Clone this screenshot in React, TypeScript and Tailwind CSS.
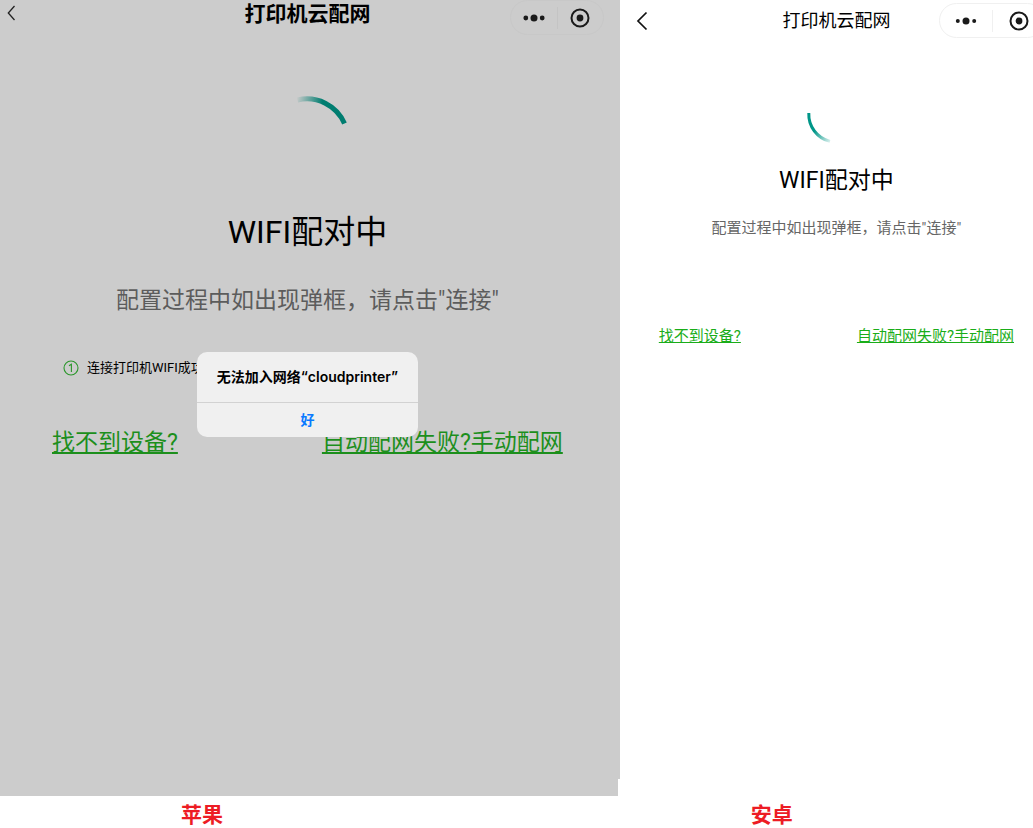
import React from "react";

type CapsuleProps = { className: string; dotsClass: string; targetClass: string; dotRadius: number };

function Capsule({ className, dotsClass, targetClass, dotRadius }: CapsuleProps) {
  return (
    <div className={`flex items-center rounded-full border ${className}`}>
      <button type="button" aria-label="更多" className={`flex items-center justify-center border-r ${dotsClass}`}>
        <svg width="22" height="8" viewBox="0 0 22 8" fill="#1a1a1a">
          <circle cx="2.8" cy="4" r={dotRadius} />
          <circle cx="11" cy="4" r="3.5" />
          <circle cx="19.2" cy="4" r={dotRadius} />
        </svg>
      </button>
      <button type="button" aria-label="关闭" className={`flex items-center justify-center ${targetClass}`}>
        <svg width="20" height="20" viewBox="0 0 20 20">
          <circle cx="10" cy="10" r="8.5" fill="none" stroke="#1a1a1a" strokeWidth="2" />
          <circle cx="10" cy="10" r="3.4" fill="#1a1a1a" />
        </svg>
      </button>
    </div>
  );
}

function IosScreen() {
  return (
    <div className="relative flex flex-1 flex-col">
      <div className="flex-1 bg-[#cccccc] pr-[5px]">
        <header className="grid grid-cols-[1fr_auto_1fr] items-start">
          <button type="button" aria-label="返回" className="flex h-[26px] w-6 items-center pl-[7px]">
            <svg width="9" height="16" viewBox="0 0 9 16" fill="none" stroke="#222" strokeWidth="1.3">
              <path d="M7.5 1 1.3 8l6.2 7" />
            </svg>
          </button>
          <h1 className="text-[21px] leading-7 font-bold text-black">打印机云配网</h1>
          <Capsule
            className="mr-[11px] h-[35px] justify-self-end border-[#c8c8c8]"
            dotsClass="h-[22px] w-[47px] border-[#c4c4c4]"
            targetClass="w-[45px]"
            dotRadius={2.4}
          />
        </header>
        <svg className="mx-auto mt-[59px]" width="90" height="90" viewBox="0 0 90 90" fill="none">
          <defs>
            <linearGradient id="ios-arc" gradientUnits="userSpaceOnUse" x1="34" y1="5" x2="60" y2="10">
              <stop offset="0" stopColor="#007d70" stopOpacity="0" />
              <stop offset="1" stopColor="#007d70" />
            </linearGradient>
          </defs>
          <path d="M35.5 6A41 41 0 0 1 82.5 29.5" stroke="url(#ios-arc)" strokeWidth="5" />
        </svg>
        <h2 className="mt-6 text-center text-[32px] leading-[48px] text-black">WIFI配对中</h2>
        <p className="mt-[29px] text-center text-[23px] leading-8 text-[#5c5c5c]">
          配置过程中如出现弹框，请点击"连接"
        </p>
        <div className="mt-10 flex items-center gap-2 pl-[63px] text-[13px] leading-[22px] text-black">
          <svg width="16" height="16" viewBox="0 0 16 16" fill="none" stroke="#2a962a" strokeWidth="1.1">
            <circle cx="8" cy="8" r="7" />
            <path d="M6 5.7 8.4 4.2V12" />
          </svg>
          <span>连接打印机WIFI成功</span>
        </div>
        <nav className="mt-12 flex justify-between px-[52px] text-[23px] leading-8 text-[#1c8f1c]">
          <a href="#device" className="underline">找不到设备?</a>
          <a href="#manual" className="underline">自动配网失败?手动配网</a>
        </nav>
      </div>
      <div className="mr-0.5 h-[17px] bg-[#cccccc]" />
      <div className="absolute inset-0 flex items-center justify-center pr-[5px] pb-[7px]">
        <div role="alertdialog" aria-labelledby="alert-title" className="w-[221px] overflow-hidden rounded-[10px] bg-[#f0f0f0]">
          <p id="alert-title" className="border-b border-[#d2d2d2] text-center text-[14px] leading-[50px] font-semibold text-black">
            无法加入网络<span className="font-[Inter]">“cloudprinter”</span>
          </p>
          <button type="button" className="block w-full text-[14px] leading-[34px] font-semibold text-[#0a7aff]">好</button>
        </div>
      </div>
    </div>
  );
}

function AndroidScreen() {
  return (
    <div className="-mr-5 flex-1">
      <header className="grid h-[41px] grid-cols-[1fr_auto_1fr] items-center">
        <button type="button" aria-label="返回" className="flex w-8 items-center pl-4">
          <svg width="12" height="20" viewBox="0 0 12 20" fill="none" stroke="#111" strokeWidth="1.7">
            <path d="M10.5 1.5 2 10l8.5 8.5" />
          </svg>
        </button>
        <h1 className="text-[18px] leading-[25px] text-black">打印机云配网</h1>
        <Capsule
          className="mr-2 h-[35px] justify-self-end border-[#f0f0f0]"
          dotsClass="h-[22px] w-[53px] border-[#f0f0f0]"
          targetClass="w-[51px]"
          dotRadius={2}
        />
      </header>
      <svg className="mx-auto mt-[43px]" width="60" height="60" viewBox="0 0 60 60" fill="none">
        <defs>
          <linearGradient id="android-arc" gradientUnits="userSpaceOnUse" x1="25" y1="58" x2="9" y2="46">
            <stop offset="0" stopColor="#009688" stopOpacity="0.1" />
            <stop offset="1" stopColor="#009688" />
          </linearGradient>
        </defs>
        <path d="M2.8 29A28 28 0 0 0 24 57.4" stroke="url(#android-arc)" strokeWidth="3" />
      </svg>
      <h2 className="mt-[21px] text-center text-[23px] leading-8 text-black">WIFI配对中</h2>
      <p className="mt-[19px] text-center text-[15px] leading-6 text-[#666666]">配置过程中如出现弹框，请点击"连接"</p>
      <nav className="mt-[84px] flex justify-between px-[39px] text-[15px] leading-6 text-[#1aad19]">
        <a href="#device" className="underline">找不到设备?</a>
        <a href="#manual" className="underline">自动配网失败?手动配网</a>
      </nav>
    </div>
  );
}

export default function App() {
  return (
    <main className="grid min-h-screen grid-cols-[3fr_2fr] bg-white font-[Roboto,'Noto_Sans_CJK_SC',sans-serif]">
      <figure className="flex flex-col">
        <IosScreen />
        <figcaption className="h-8 pl-[181px] text-[21px] leading-[38px] font-bold text-[#ed1c24]">苹果</figcaption>
      </figure>
      <figure className="flex flex-col overflow-hidden">
        <AndroidScreen />
        <figcaption className="h-8 pl-[131px] text-[21px] leading-[38px] font-bold text-[#ed1c24]">安卓</figcaption>
      </figure>
    </main>
  );
}
